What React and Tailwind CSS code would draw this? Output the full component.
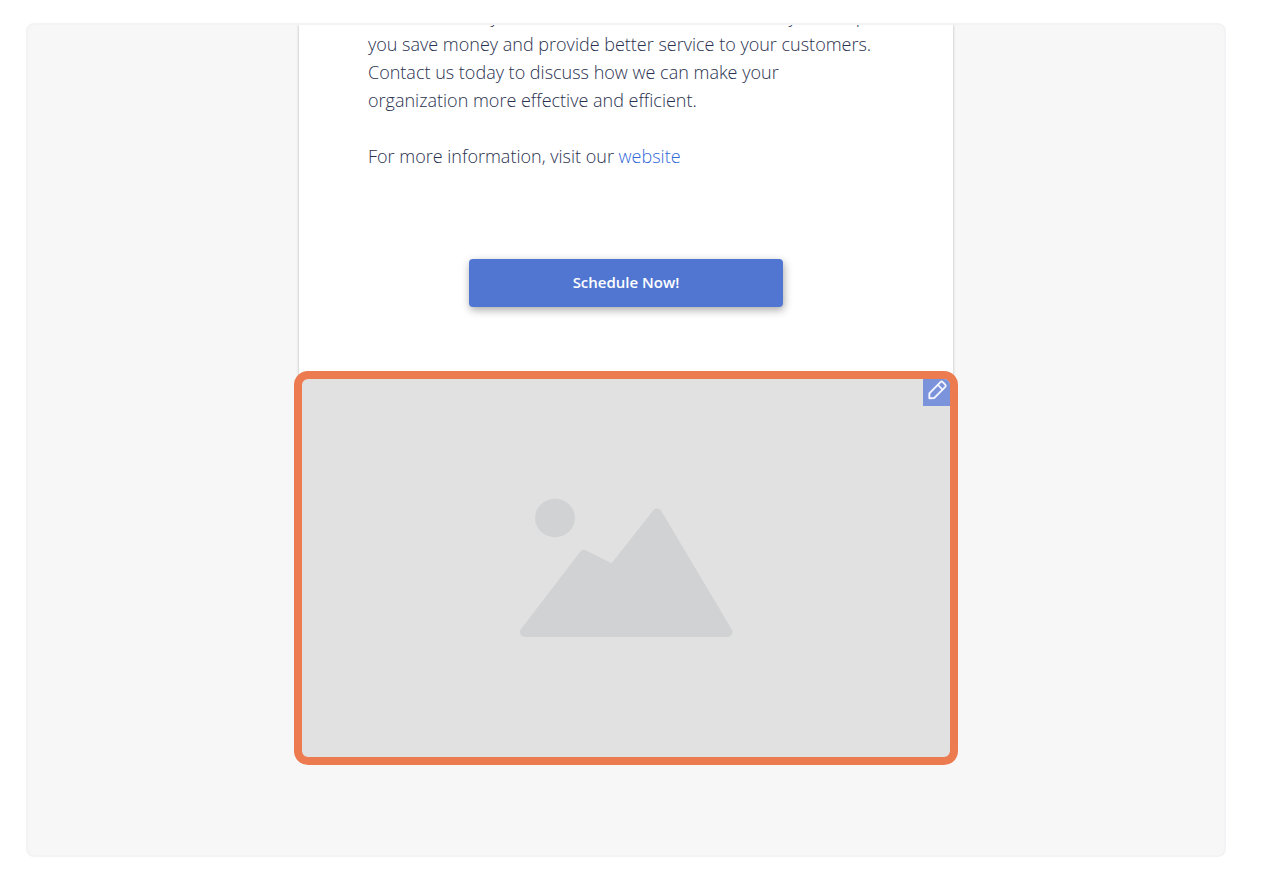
import React from "react";

function PencilIcon() {
  return (
    <svg className="h-6 w-7" viewBox="0 0 28 24" fill="none" stroke="#f4f6ff" strokeWidth="2" strokeLinejoin="round" strokeLinecap="round" aria-hidden="true">
      <path d="M6.6 14.5 18.1 2.8Q19.2 1.7 20.4 2.8L23.1 5.4Q24.2 6.5 23.1 7.7L11.8 19.2 6.6 19.5Z" />
      <path d="M15.4 5.6 20.3 10.5" strokeWidth="1.7" />
    </svg>
  );
}

function PlaceholderArt() {
  return (
    <svg className="h-[140px] w-[214px]" viewBox="0 0 214 140" fill="#d0d2d4" role="img" aria-label="Image placeholder">
      <ellipse cx="36" cy="20" rx="20" ry="19.2" />
      <path d="M6 134 65 57 94 71.5 138 15.5 208.5 134Z" stroke="#d0d2d4" strokeWidth="10" strokeLinejoin="round" />
    </svg>
  );
}

export default function App() {
  return (
    <div className="bg-white pt-[23px] pr-9 pb-4 pl-[26px] font-['Open_Sans',sans-serif]">
      <main className="overflow-hidden rounded-lg border-2 border-[#f3f3f5] bg-[#f7f7f7] pb-[94px]">
        <article className="mx-auto flow-root max-w-[654px] rounded-b-2xl bg-white shadow-[0_0_3px_rgba(0,0,0,0.28)]">
          <div className="-mt-[23px] px-[69px] text-lg leading-7 font-light text-[#2a3150] [font-variant-ligatures:none]">
            <p>
              We can assure you that there are a series of new ways to help
              <br />
              you save money and provide better service to your customers.
              <br />
              Contact us today to discuss how we can make your
              <br />
              organization more effective and efficient.
            </p>
            <p className="mt-7">
              For more information, visit our{" "}
              <a href="#website" className="text-[#2f68d8]">website</a>
            </p>
          </div>
          <div className="flex justify-center pt-[89px] pb-16">
            <button type="button" className="h-12 w-[314px] rounded-sm bg-[#5076d1] pb-0.5 text-[15px] font-semibold text-white shadow-[1px_3px_8px_rgba(0,0,0,0.35)]">
              Schedule Now!
            </button>
          </div>
          <figure className="relative -mx-[5px] -mb-1 flex h-[394px] items-center justify-center overflow-hidden rounded-[14px] border-8 border-[#ed7b50] bg-[#e1e1e1]">
            <PlaceholderArt />
            <button type="button" aria-label="Edit image" className="absolute top-0 right-0 flex h-[27px] w-[27px] items-start justify-center bg-[#7b93da]">
              <PencilIcon />
            </button>
          </figure>
        </article>
      </main>
    </div>
  );
}
